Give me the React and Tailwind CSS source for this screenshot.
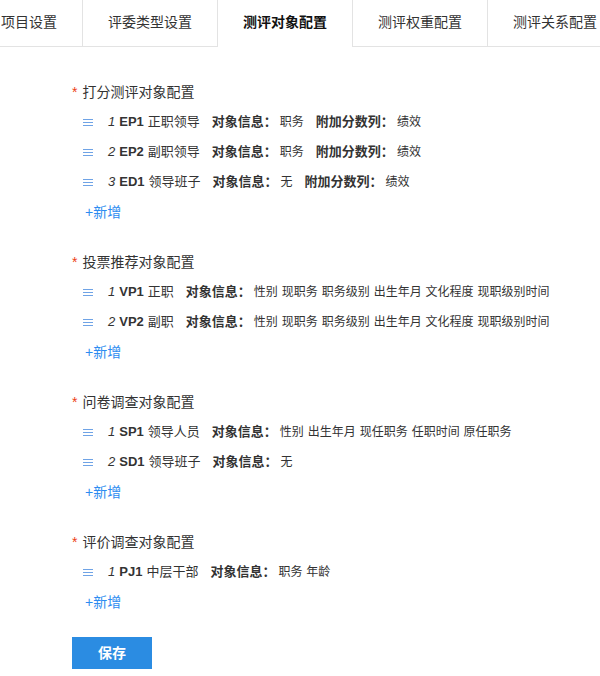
import React from "react";

const FONT = { fontFamily: '"Liberation Sans", "Noto Sans CJK SC", sans-serif' };

const tabs = ["项目设置", "评委类型设置", "测评对象配置", "测评权重配置", "测评关系配置"];

function MenuIcon() {
  return (
    <svg width="10" height="7" viewBox="0 0 10 7" className="shrink-0">
      <g stroke="#6fa3e6" strokeWidth="1">
        <line x1="0" y1="0.5" x2="10" y2="0.5" />
        <line x1="0" y1="3.5" x2="10" y2="3.5" />
        <line x1="0" y1="6.5" x2="10" y2="6.5" />
      </g>
    </svg>
  );
}

const sections = [
  {
    title: "打分测评对象配置",
    rows: [
      { n: "1", code: "EP1", name: "正职领导", info: "职务", extra: "绩效" },
      { n: "2", code: "EP2", name: "副职领导", info: "职务", extra: "绩效" },
      { n: "3", code: "ED1", name: "领导班子", info: "无", extra: "绩效" },
    ],
  },
  {
    title: "投票推荐对象配置",
    rows: [
      { n: "1", code: "VP1", name: "正职", info: "性别 现职务 职务级别 出生年月 文化程度 现职级别时间" },
      { n: "2", code: "VP2", name: "副职", info: "性别 现职务 职务级别 出生年月 文化程度 现职级别时间" },
    ],
  },
  {
    title: "问卷调查对象配置",
    rows: [
      { n: "1", code: "SP1", name: "领导人员", info: "性别 出生年月 现任职务 任职时间 原任职务" },
      { n: "2", code: "SD1", name: "领导班子", info: "无" },
    ],
  },
  {
    title: "评价调查对象配置",
    rows: [{ n: "1", code: "PJ1", name: "中层干部", info: "职务 年龄" }],
  },
];

function Row({ r }) {
  return (
    <div className="flex h-[30px] items-center pl-[11px] text-[13px] text-[#333] whitespace-nowrap">
      <MenuIcon />
      <span className="ml-[15px] italic">{r.n}</span>
      <span className="ml-[4px] font-bold">{r.code}</span>
      <span className="ml-[4px]">{r.name}</span>
      <span className="ml-[12px] font-bold">对象信息：</span>
      <span className="ml-[3px] text-[12px] [word-spacing:0.6px]">{r.info}</span>
      {r.extra && (
        <>
          <span className="ml-[12px] font-bold">附加分数列：</span>
          <span className="ml-[3px] text-[12px]">{r.extra}</span>
        </>
      )}
    </div>
  );
}

export default function App() {
  return (
    <div className="w-[600px] h-[676px] bg-white overflow-hidden" style={FONT}>
      <div className="flex h-[47px] border-b border-[#e3e3e3] -ml-[24px] overflow-visible">
        {tabs.map((t, i) => {
          const active = i === 2;
          return (
            <div
              key={t}
              className={
                active
                  ? "flex h-[47px] shrink-0 items-center border-r border-[#e3e3e3] bg-white px-[25px] pb-[2px] text-[14px] font-bold text-[#111] -mb-[1px]"
                  : "flex h-[46px] shrink-0 items-center border-r border-[#e3e3e3] px-[25px] pb-[1px] text-[14px] text-[#333]"
              }
            >
              {t}
            </div>
          );
        })}
      </div>

      <div className="flex flex-col gap-5 pl-[72px] pt-[30px]">
        {sections.map((s) => (
          <div key={s.title} className="flex flex-col">
            <div className="flex h-[30px] items-center text-[14px] text-[#333]">
              <span className="mr-[5px] text-[#ed4014]">*</span>
              <span>{s.title}</span>
            </div>
            {s.rows.map((r) => (
              <Row key={r.code} r={r} />
            ))}
            <div className="flex h-[30px] items-center pl-[13px] text-[14px] text-[#2d8cf0]">+新增</div>
          </div>
        ))}
        <div>
          <button className="h-[32px] w-[80px] bg-[#2b8ce2] text-[14px] font-bold text-white">保存</button>
        </div>
      </div>
    </div>
  );
}
